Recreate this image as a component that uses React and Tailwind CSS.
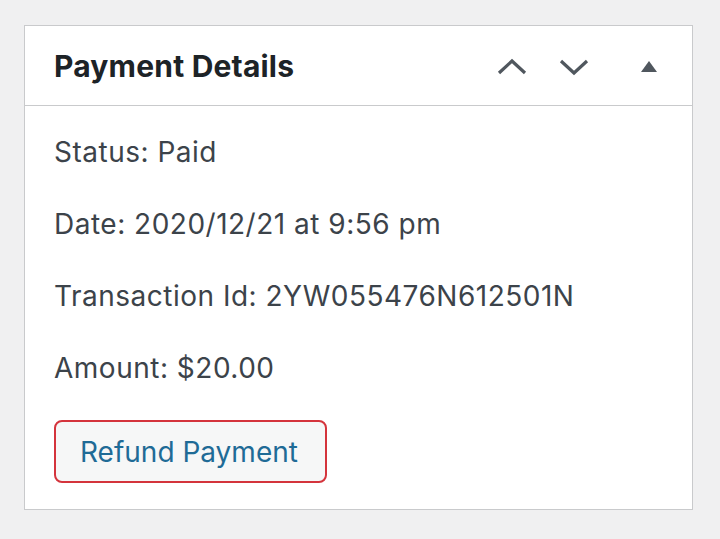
export default function App() {
  const rows = [
    "Status: Paid",
    "Date: 2020/12/21 at 9:56 pm",
    "Transaction Id: 2YW055476N612501N",
    "Amount: $20.00",
  ];

  return (
    <div
      className="w-[720px] h-[539px] bg-[#f0f0f1] pt-[25px] pl-[24px]"
      style={{ fontFamily: "Inter, 'Liberation Sans', sans-serif" }}
    >
      <div className="w-[669px] h-[485px] bg-white border border-[#c9cacc] flex flex-col">
        {/* Header */}
        <div className="h-[80px] border-b border-[#c9cacc] flex items-center pl-[29px] pr-[34px] pt-[2px]">
          <h2 className="text-[30px] font-bold text-[#1d2327] tracking-[0.2px] flex-1">
            Payment Details
          </h2>
          <div className="flex items-center">
            <svg width="32" height="18" viewBox="0 0 32 18" className="mr-[30px]">
              <path d="M3 15 L16 3 L29 15" fill="none" stroke="#50575e" strokeWidth="3.2" />
            </svg>
            <svg width="32" height="18" viewBox="0 0 32 18" className="mr-[50px]">
              <path d="M3 3 L16 15 L29 3" fill="none" stroke="#50575e" strokeWidth="3.2" />
            </svg>
            <svg width="18" height="12" viewBox="0 0 18 12">
              <path d="M9 0 L17 11 L1 11 Z" fill="#50575e" />
            </svg>
          </div>
        </div>

        {/* Content */}
        <div className="pl-[29px] pt-[29px] flex flex-col">
          {rows.map((r) => (
            <p key={r} className="text-[28px] leading-[34px] tracking-[0.5px] text-[#3c434a] mb-[38px]">
              {r}
            </p>
          ))}
          <button className="w-[273px] h-[63px] -mt-[3px] rounded-[8px] border-2 border-[#d4343c] bg-[#f6f7f7] text-[28px] text-[#1f6b96] text-left pl-[24px]">
            Refund Payment
          </button>
        </div>
      </div>
    </div>
  );
}
